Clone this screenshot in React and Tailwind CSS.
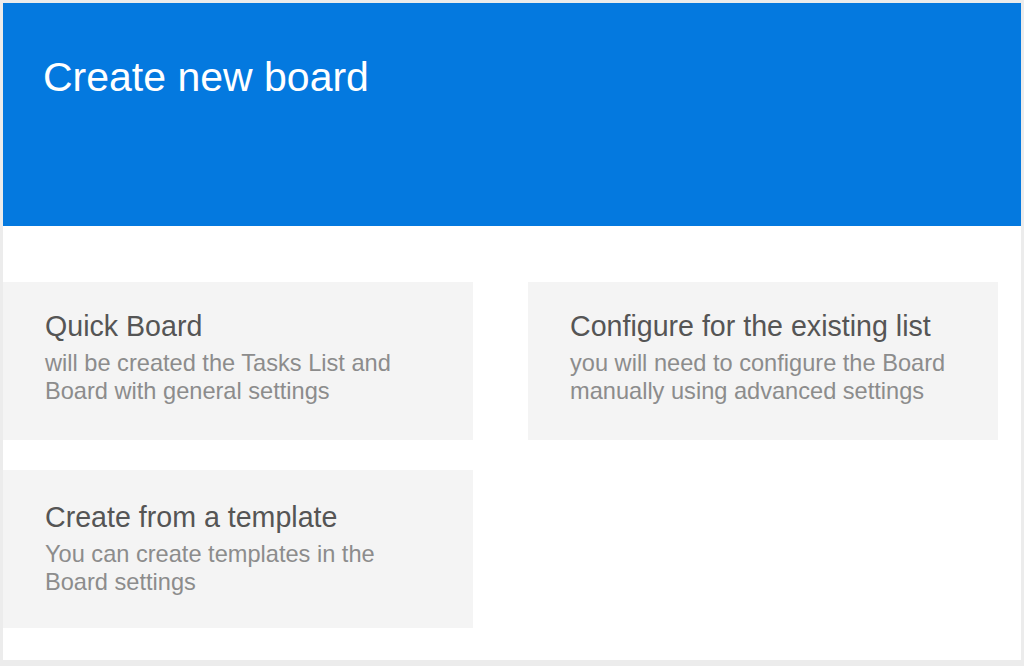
function OptionCard({ title, lines, className = "pt-[28px]" }) {
  return (
    <button
      className={`w-[470px] h-[158px] bg-[#f4f4f4] text-left pl-[42px] flex flex-col ${className}`}
    >
      <span className="text-[28.6px] leading-[32px] text-[#555555]">
        {title}
      </span>

      <span className="mt-[7px] text-[23.6px] leading-[28px] text-[#8c8c8c]">
        {lines.map((line) => (
          <span key={line} className="block">
            {line}
          </span>
        ))}
      </span>
    </button>
  );
}

export default function App() {
  return (
    <div
      className="w-[1024px] h-[666px] bg-[#ececec] p-[3px] overflow-hidden"
      style={{ fontFamily: '"Liberation Sans", Arial, sans-serif' }}
    >
      <div className="h-[657px] bg-white flex flex-col">

        {/* Header */}
        <header className="h-[223px] bg-[#0479df] pl-[40px] pt-[50px]">
          <h1 className="text-[41px] leading-[48px] text-white">
            Create new board
          </h1>
        </header>

        {/* Options */}
        <div className="grid grid-cols-[470px_470px] gap-x-[55px] gap-y-[30px] mt-[56px]">
          <OptionCard
            title="Quick Board"
            lines={[
              "will be created the Tasks List and",
              "Board with general settings",
            ]}
          />

          <OptionCard
            title="Configure for the existing list"
            lines={[
              "you will need to configure the Board",
              "manually using advanced settings",
            ]}
          />

          <OptionCard
            title="Create from a template"
            className="pt-[31px]"
            lines={[
              "You can create templates in the",
              "Board settings",
            ]}
          />
        </div>

      </div>
    </div>
  );
}
